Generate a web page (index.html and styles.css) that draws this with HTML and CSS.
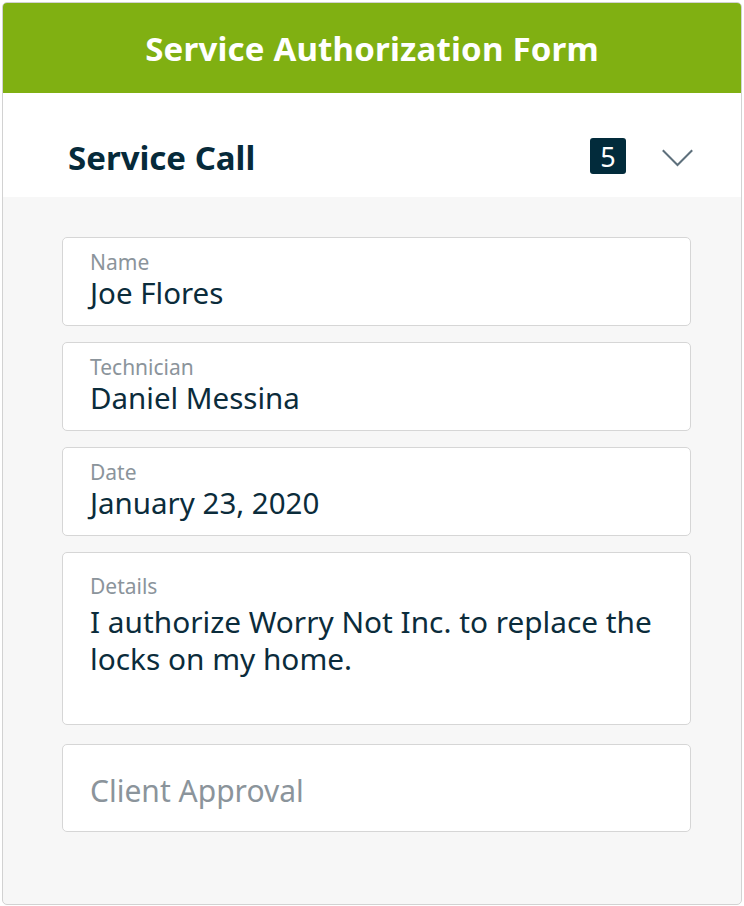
FILE: index.html
```html
<!DOCTYPE html>
<html lang="en">
<head>
<meta charset="utf-8">
<title>Service Authorization Form</title>
<link rel="stylesheet" href="styles.css">
</head>
<body>
<div class="card">
  <header class="card-header">
    <h1 class="card-title">Service Authorization Form</h1>
  </header>
  <div class="section-head">
    <h2 class="section-title">Service Call</h2>
    <div class="section-tools">
      <span class="badge">5</span>
      <svg class="chevron" width="31" height="18" viewBox="0 0 31 18" aria-hidden="true">
        <path d="M0.8 1.2 L15.5 16 L30.2 1.2" fill="none" stroke="#5e707c" stroke-width="2"/>
      </svg>
    </div>
  </div>
  <div class="section-body">
    <div class="field">
      <div class="field-label">Name</div>
      <div class="field-value">Joe Flores</div>
    </div>
    <div class="field">
      <div class="field-label">Technician</div>
      <div class="field-value">Daniel Messina</div>
    </div>
    <div class="field">
      <div class="field-label">Date</div>
      <div class="field-value">January 23, 2020</div>
    </div>
    <div class="field field-tall">
      <div class="field-label">Details</div>
      <div class="field-value field-multiline">I authorize Worry Not Inc. to replace the locks on my home.</div>
    </div>
    <div class="field field-empty">
      <div class="field-placeholder">Client Approval</div>
    </div>
  </div>
</div>
</body>
</html>
```

FILE: styles.css
```css
* { box-sizing: border-box; }
html, body { margin: 0; padding: 0; background: #ffffff; }
body {
  font-family: "Noto Sans", "Open Sans", sans-serif;
  padding: 2px;
  width: 744px;
}
.card {
  width: 740px;
  height: 903px;
  border: 1px solid #d2d2d2;
  border-radius: 5px;
  overflow: hidden;
  background: #f7f7f7;
  display: flex;
  flex-direction: column;
}
.card-header {
  background: #80b012;
  height: 90px;
  flex: none;
  display: flex;
  align-items: center;
  justify-content: center;
}
.card-title {
  margin: 0;
  color: #ffffff;
  font-size: 33px;
  font-weight: 700;
  letter-spacing: 0.2px;
}
.section-head {
  background: #ffffff;
  height: 104px;
  flex: none;
  display: flex;
  align-items: center;
  justify-content: space-between;
  padding: 25px 48px 0 65px;
}
.section-title {
  margin: 0 0 1px;
  font-size: 33px;
  font-weight: 700;
  color: #062a3a;
}
.section-tools {
  display: flex;
  align-items: center;
  gap: 36px;
}
.badge {
  width: 36px;
  height: 36px;
  background: #022b3b;
  color: #ffffff;
  border-radius: 3px;
  font-size: 27px;
  display: flex;
  align-items: center;
  justify-content: center;
  line-height: 1;
  margin-bottom: 3px;
}
.chevron { display: block; margin-top: 1px; }
.section-body {
  padding: 40px 50px 0 59px;
  display: flex;
  flex-direction: column;
  gap: 16px;
}
.field {
  background: #ffffff;
  border: 1px solid #d6d6d6;
  border-radius: 5px;
  height: 89px;
  padding: 13px 28px 0 27px;
}
.field-tall { height: 173px; padding-top: 22px; }
.field-label {
  font-size: 21px;
  color: #8b949b;
  line-height: 22px;
}
.field-value {
  font-size: 29.5px;
  color: #0b2c3b;
  line-height: 40px;
}
.field-multiline {
  font-size: 29.8px;
  line-height: 37px;
  margin-top: 6px;
}
.field-empty {
  height: 88px;
  display: flex;
  align-items: center;
  padding-top: 0;
  margin-top: 3px;
}
.field-placeholder {
  font-size: 30px;
  color: #8b949b;
  margin-top: 4px;
}
```
